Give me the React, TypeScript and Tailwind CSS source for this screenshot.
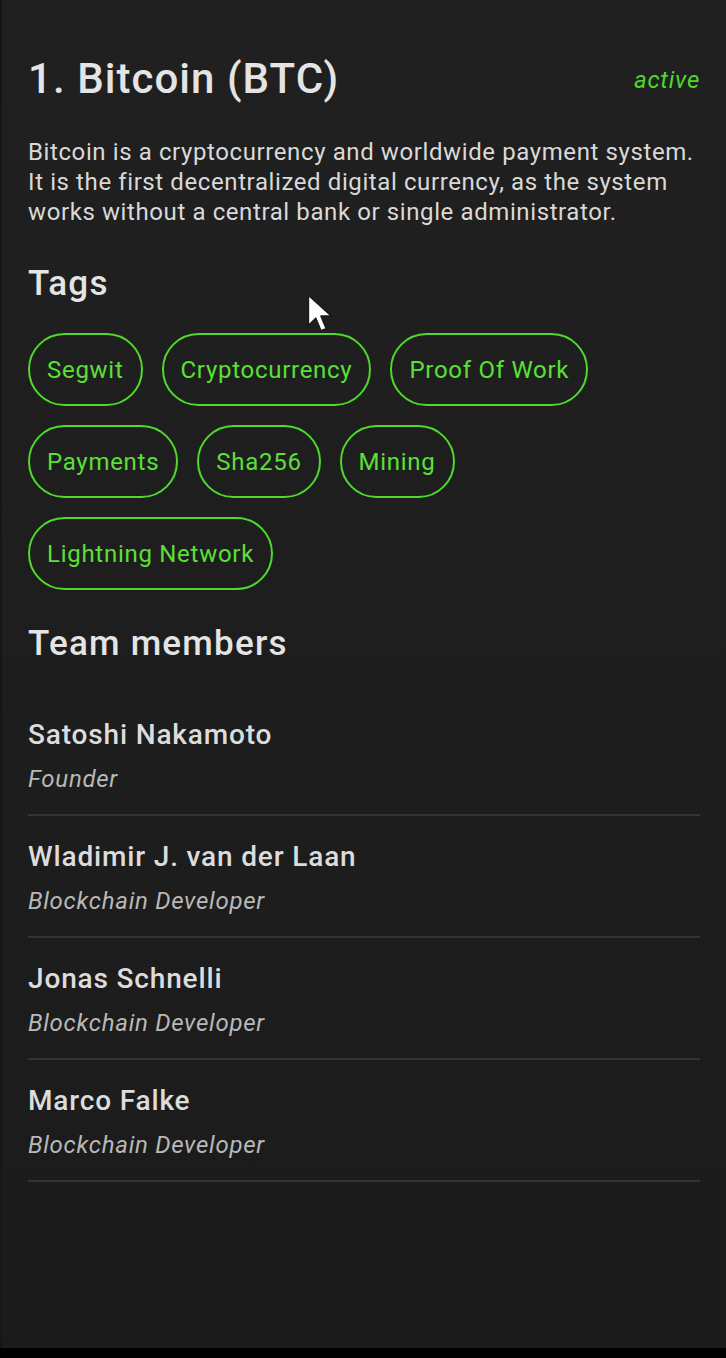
import React from 'react';

const tags = ['Segwit', 'Cryptocurrency', 'Proof Of Work', 'Payments', 'Sha256', 'Mining', 'Lightning Network'];

const team = [
  { name: 'Satoshi Nakamoto', role: 'Founder' },
  { name: 'Wladimir J. van der Laan', role: 'Blockchain Developer' },
  { name: 'Jonas Schnelli', role: 'Blockchain Developer' },
  { name: 'Marco Falke', role: 'Blockchain Developer' },
];

function Cursor() {
  return (
    <svg className="absolute left-[306px] top-[293px]" width="30" height="42" viewBox="0 0 28 40">
      <path d="M2 2 L2 31 L9 24 L14 36 L19 34 L14 22 L24 22 Z" fill="#ffffff" stroke="#1a1a1a" strokeWidth="1.5" strokeLinejoin="round" />
    </svg>
  );
}

export default function App() {
  return (
    <div className="relative flex h-[1358px] w-full flex-col bg-black font-['Roboto',sans-serif]">
      <div className="flex-1 border-l-2 border-[#161616] bg-gradient-to-b from-[#202020] to-[#1b1b1b] pl-[26px] pr-[26px] pt-[55px]">
        {/* coin header */}
        <div className="flex items-start justify-between">
          <h1 className="text-[42px] leading-[48px] font-medium tracking-[0.025em] text-[#e4e4e4]">1. Bitcoin (BTC)</h1>
          <span className="mt-[7px] text-[24px] italic tracking-[0.03em] text-[#4fd92c]">active</span>
        </div>

        <p className="mt-[34px] text-[24px] leading-[30px] tracking-[0.025em] text-[#d9d9d9] whitespace-nowrap">
          Bitcoin is a cryptocurrency and worldwide payment system.
          <br />
          It is the first decentralized digital currency, as the system
          <br />
          works without a central bank or single administrator.
        </p>

        <h2 className="mt-[37px] text-[35px] leading-[40px] font-medium tracking-[0.035em] text-[#e4e4e4]">Tags</h2>
        <div className="mt-[29px] flex flex-wrap gap-x-[19px] gap-y-[19px]">
          {tags.map((t) => (
            <div
              key={t}
              className="flex h-[73px] items-center rounded-full border-2 border-[#4fd92c] px-[17px] text-[24px] tracking-[0.03em] text-[#5ae036]"
            >
              {t}
            </div>
          ))}
        </div>

        <h2 className="mt-[34px] text-[35px] leading-[40px] font-medium tracking-[0.035em] text-[#e4e4e4]">Team members</h2>
        <div className="mt-[30px]">
          {team.map((m) => (
            <div key={m.name} className="border-b-2 border-[#333333] pt-[25px] pb-[20px]">
              <div className="text-[28px] leading-[32px] font-medium tracking-[0.03em] text-[#dcdcdc]">{m.name}</div>
              <div className="mt-[13px] text-[24px] leading-[30px] italic tracking-[0.03em] text-[#b8b8b8]">{m.role}</div>
            </div>
          ))}
        </div>
      </div>
      <div className="h-[10px] bg-black" />
      <Cursor />
    </div>
  );
}
